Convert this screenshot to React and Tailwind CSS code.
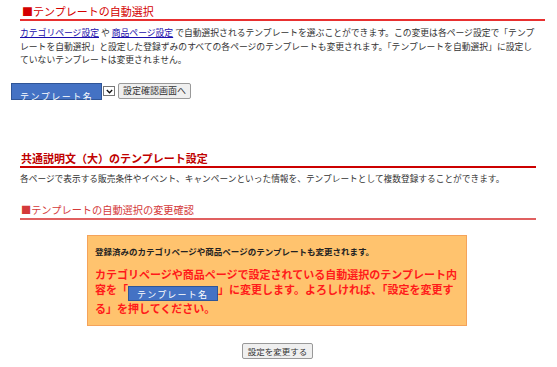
export default function App() {
  const font = { fontFamily: '"Noto Sans CJK JP", "Noto Sans", sans-serif' };
  return (
    <div className="w-[557px] h-[367px] bg-white overflow-hidden" style={font}>
      <div className="pl-[20px] pr-[12px]">
        <h2 className="pt-[4px] pl-[2px] text-[11px] leading-[14px] text-[#d40000] border-b-[2px] border-[#e83030] pb-[1px]">
          ■テンプレートの自動選択
        </h2>
        <p className="mt-[5px] text-[8.8px] leading-[13.5px] text-[#333] whitespace-nowrap">
          <a className="text-[#1a0dab] underline">カテゴリページ設定</a>
          <span> や </span>
          <a className="text-[#1a0dab] underline">商品ページ設定</a>
          <span> で自動選択されるテンプレートを選ぶことができます。この変更は各ページ設定で「テンプ</span>
          <br />
          レートを自動選択」と設定した登録ずみのすべての各ページのテンプレートも変更されます。「テンプレートを自動選択」に設定し
          <br />
          ていないテンプレートは変更されません。
        </p>
        <div className="-ml-[9px] mt-[16px] flex items-center">
          <div className="w-[91px] h-[17px] bg-[#4472c4] border border-[#2f5597] flex items-end pl-[8px]">
            <span className="text-white text-[9px] leading-[11px] tracking-[1.5px] translate-y-[3px]">テンプレート名</span>
          </div>
          <div className="w-[12px] h-[10px] border border-[#777] flex items-center justify-center ml-[1px]">
            <svg width="7" height="5" viewBox="0 0 7 5"><path d="M0.8 1 L3.5 3.8 L6.2 1" fill="none" stroke="#111" strokeWidth="1.3" /></svg>
          </div>
          <button className="ml-[3px] h-[16px] px-[4px] text-[9px] leading-[14px] text-[#333] bg-[#efefef] border border-[#999] rounded-[2px]">
            設定確認画面へ
          </button>
        </div>

        <div className="pr-[9px]">
          <h2 className="mt-[51px] pl-[1px] text-[11px] leading-[14px] font-bold text-[#c00000] border-b-[2px] border-[#cc0000] pb-[1px]">
            共通説明文（大）のテンプレート設定
          </h2>
          <p className="mt-[4px] text-[8.7px] leading-[13px] text-[#333]">
            各ページで表示する販売条件やイベント、キャンペーンといった情報を、テンプレートとして複数登録することができます。
          </p>
          <h2 className="mt-[18px] pl-[1px] text-[10.2px] leading-[14px] text-[#d43a3a] border-b-[2px] border-[#e06060] pb-[1px]">
            ■テンプレートの自動選択の変更確認
          </h2>
        </div>
      </div>

      <div className="mt-[15px] ml-[87px] w-[380px] h-[91px] bg-[#ffc36e] border border-[#f5a35a] px-[7px] pt-[9px]">
        <p className="text-[8.5px] leading-[12px] font-bold text-[#222]">
          登録済みのカテゴリページや商品ページのテンプレートも変更されます。
        </p>
        <p className="mt-[10px] text-[11px] leading-[15.5px] font-bold text-[#ff1a1a]">
          カテゴリページや商品ページで設定されている自動選択のテンプレート内容を「
          <span className="inline-block align-[-4px] w-[90px] h-[15px] bg-[#4472c4] border border-[#2f5597] pl-[8px]">
            <span className="block text-white text-[9px] leading-[11px] tracking-[1.2px] font-normal mt-[2px]">テンプレート名</span>
          </span>
          」に変更します。よろしければ、「設定を変更する」を押してください。
        </p>
      </div>

      <div className="mt-[17px] flex justify-center">
        <button className="h-[16px] px-[5px] text-[8.5px] leading-[14px] text-[#333] bg-[#efefef] border border-[#999] rounded-[2px] -translate-x-[1px]">
          設定を変更する
        </button>
      </div>
    </div>
  );
}
